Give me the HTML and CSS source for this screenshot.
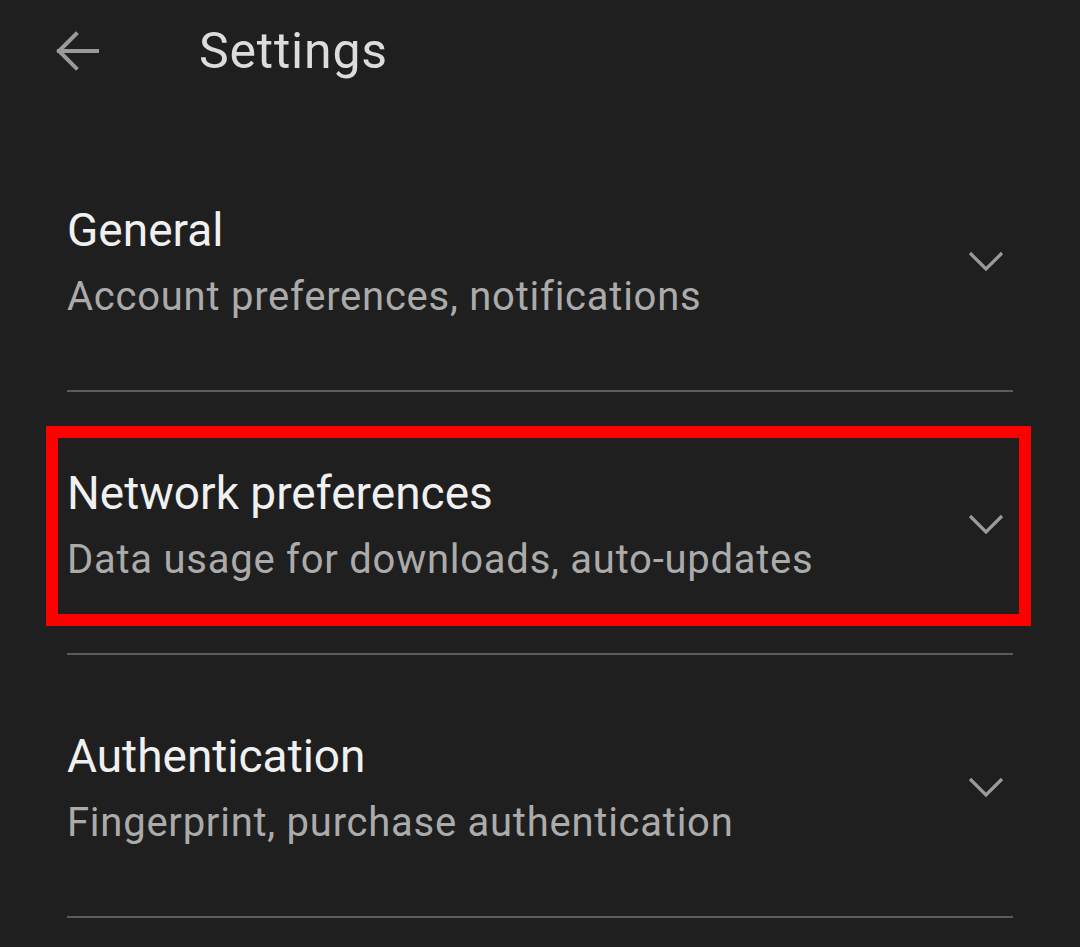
FILE: index.html
```html
<!DOCTYPE html>
<html lang="en">
<head>
<meta charset="utf-8">
<title>Settings</title>
<link rel="stylesheet" href="styles.css">
</head>
<body>
<div class="screen">
  <header class="topbar">
    <svg class="back" width="44" height="44" viewBox="0 0 44 44" aria-hidden="true">
      <path d="M42 22H4M21 5L4 22l17 17" fill="none" stroke="#9a9a9a" stroke-width="4" stroke-linecap="square" stroke-linejoin="miter"/>
    </svg>
    <h1 class="title">Settings</h1>
  </header>
  <main class="list">
    <section class="item">
      <div class="text">
        <div class="item-title">General</div>
        <div class="item-sub">Account preferences, notifications</div>
      </div>
      <svg class="chev" width="36" height="20" viewBox="0 0 36 20" aria-hidden="true"><path d="M2 2l16 16L34 2" fill="none" stroke="#9a9a9a" stroke-width="3.2"/></svg>
    </section>
    <section class="item highlighted">
      <div class="text">
        <div class="item-title">Network preferences</div>
        <div class="item-sub">Data usage for downloads, auto-updates</div>
      </div>
      <svg class="chev" width="36" height="20" viewBox="0 0 36 20" aria-hidden="true"><path d="M2 2l16 16L34 2" fill="none" stroke="#9a9a9a" stroke-width="3.2"/></svg>
      <div class="marker"></div>
    </section>
    <section class="item">
      <div class="text">
        <div class="item-title">Authentication</div>
        <div class="item-sub">Fingerprint, purchase authentication</div>
      </div>
      <svg class="chev" width="36" height="20" viewBox="0 0 36 20" aria-hidden="true"><path d="M2 2l16 16L34 2" fill="none" stroke="#9a9a9a" stroke-width="3.2"/></svg>
    </section>
  </main>
</div>
</body>
</html>
```

FILE: styles.css
```css
html, body {
  margin: 0;
  padding: 0;
  background: #1f1f1f;
}
body {
  font-family: Roboto, "Noto Sans", sans-serif;
  width: 1080px;
  height: 947px;
  overflow: hidden;
}
.screen {
  display: flex;
  flex-direction: column;
}
.topbar {
  height: 102px;
  display: flex;
  align-items: center;
  padding-left: 55px;
}
.back {
  display: block;
  margin-right: 100px;
}
.title {
  margin: 0;
  font-size: 50px;
  font-weight: 400;
  letter-spacing: 0.8px;
  color: #dcdcdc;
  line-height: 60px;
}
.list {
  padding: 27px 67px 0 67px;
  display: flex;
  flex-direction: column;
}
.item {
  position: relative;
  display: flex;
  align-items: center;
  justify-content: space-between;
  padding: 71px 0 56px 0;
  border-bottom: 2px solid #5c5c5c;
}
.text {
  display: flex;
  flex-direction: column;
}
.item-title {
  font-size: 46px;
  line-height: 60px;
  color: #f0f0f0;
}
.item-sub {
  font-size: 40px;
  line-height: 74px;
  color: #ababab;
  letter-spacing: 0.75px;
}
.chev {
  display: block;
  margin-right: 9px;
  margin-bottom: 12px;
}
.marker {
  position: absolute;
  top: 34px;
  left: -21px;
  right: -18px;
  bottom: 27px;
  border: 12px solid #ff0000;
}
```
